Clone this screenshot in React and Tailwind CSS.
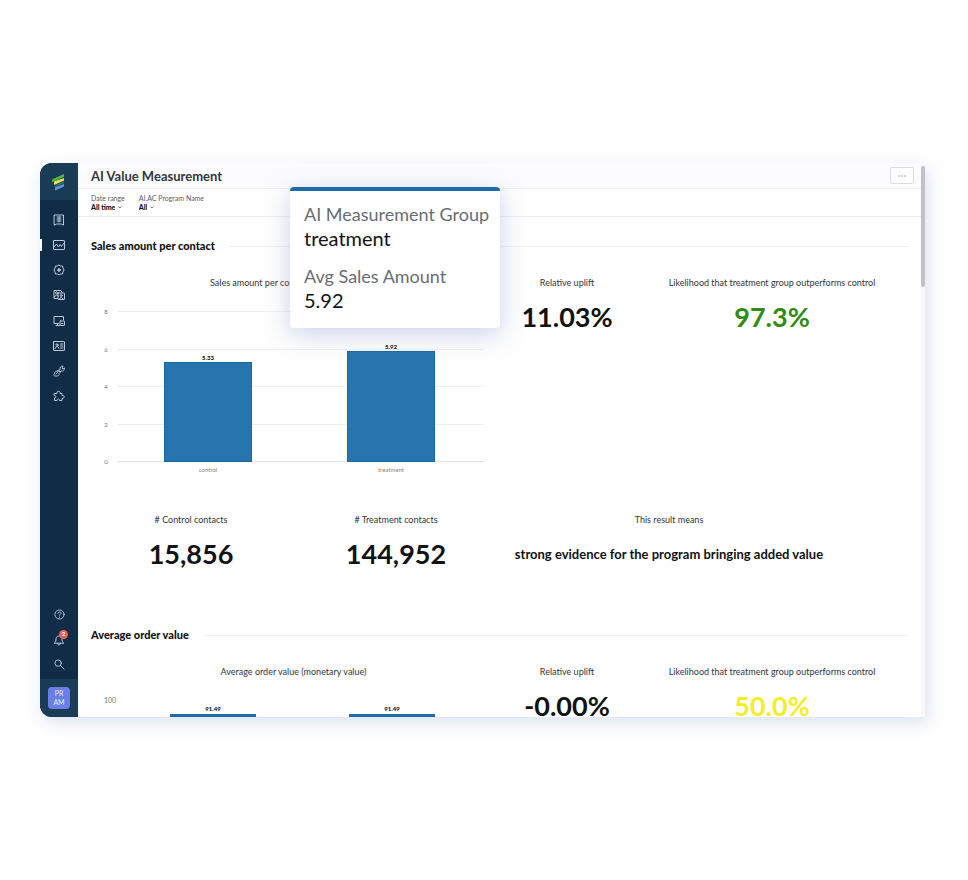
import React from "react";

const ink = "#111214";

function Icon({ children, size = 12 }) {
  return (
    <svg
      width={size}
      height={size}
      viewBox="0 0 24 24"
      fill="none"
      stroke="currentColor"
      strokeWidth="2"
      strokeLinecap="round"
      strokeLinejoin="round"
      aria-hidden="true"
    >
      {children}
    </svg>
  );
}

const navItems = [
  {
    name: "Programs",
    icon: (
      <>
        <path d="M3 2h18v20l-4-2h-10l-4 2z" />
        <path d="M8 6h8M8 10h8M8 14h8M12 6v10" />
      </>
    ),
  },
  {
    name: "Analytics",
    active: true,
    icon: (
      <>
        <rect x="1" y="3" width="22" height="18" rx="1" />
        <path d="M2 16l5-6 4 6 3-5 3 4 5-7" />
      </>
    ),
  },
  {
    name: "Automation",
    icon: (
      <>
        <path d="M12 2l3 2h4l1 4 2 4-2 4-1 4h-4l-3 2-3-2H5l-1-4-2-4 2-4 1-4h4z" />
        <circle cx="12" cy="12" r="2.500" fill="currentColor" />
      </>
    ),
  },
  {
    name: "Content",
    icon: (
      <>
        <path d="M9 19H2V3h14l2 4" />
        <circle cx="7" cy="8" r="2" />
        <path d="M2 16l5-4 3 2" />
        <rect x="10" y="8" width="13" height="13" rx="1" />
        <circle cx="16.500" cy="13" r="2" />
        <path d="M13 20c0-4 7-4 7 0" />
      </>
    ),
  },
  {
    name: "Channels",
    icon: (
      <>
        <path d="M12 17H2V3h19v7" />
        <path d="M6 21h7M9 17v4" />
        <rect x="14" y="12" width="9" height="9" rx="1" />
        <path d="M17 17h3" />
      </>
    ),
  },
  {
    name: "Contacts",
    icon: (
      <>
        <rect x="1" y="3" width="22" height="18" rx="1" />
        <circle cx="8" cy="10" r="2.300" />
        <path d="M4 17c0-5 8-5 8 0M15 8h5M15 12h5M15 16h5" />
      </>
    ),
  },
  {
    name: "Tools",
    icon: (
      <>
        <path d="M14 9c-1-4 2-7 6-7l-2 4 2 2 3-2c0 5-3 7-7 6l-2 2-3-3z" />
        <path d="M10 11l4 4-2 2c1 3-2 6-7 5-5 0-3-3-2-5 1-4 3-5 5-4z" />
        <path d="M6 18l3-3" />
      </>
    ),
  },
  {
    name: "Add-ons",
    icon: (
      <path d="M3 7h5c-2-6 8-6 6 0h4v4c6-1 6 6 0 6v4h-5c0-4-5-4-5 0H3v-5c4 0 4-5 0-5z" />
    ),
  },
];

function Logo() {
  return (
    <svg width="16" height="18" viewBox="0 0 16 18" aria-label="Emarsys" role="img">
      <path d="M1 6.500 13 1v2.800L5 7.500 1 9z" fill="#56b947" />
      <path d="M3 8.500 13 5v2.600L3 12z" fill="#f4e04d" />
      <path d="M13 8v2.500L4 14.500V12z" fill="#2c6d6b" />
      <path d="M4 14.500 13 11v2.500L4 17.500z" fill="#6794e0" />
    </svg>
  );
}

function Sidebar() {
  return (
    <aside className="flex w-[38px] shrink-0 flex-col overflow-hidden rounded-l-xl bg-[#102c47] text-[#b9c8d8]">
      <div className="flex h-[37px] items-center justify-center bg-[#1b3c57]">
        <Logo />
      </div>
      <nav className="mt-[7px] flex h-[202px] flex-col justify-between">
        {navItems.map((item) => (
          <button
            key={item.name}
            type="button"
            aria-label={item.name}
            className="flex h-[25px] w-full items-center"
          >
            <span className={item.active ? "h-3 w-[2px] bg-white" : "h-3 w-[2px]"} />
            <span className="flex flex-1 justify-center pr-[2px]">
              <Icon>{item.icon}</Icon>
            </span>
          </button>
        ))}
      </nav>
      <div className="mt-auto flex flex-col pb-[2px]">
        <button type="button" aria-label="Help" className="flex h-[25px] items-center justify-center">
          <Icon size={11}>
            <circle cx="12" cy="12" r="10" />
            <path d="M8.500 9.500c0-4.500 7-4 7-.5 0 2.500-3.500 2.500-3.500 5M12 17.500v.5" />
          </Icon>
        </button>
        <button type="button" aria-label="Notifications" className="flex h-[25px] items-center justify-center">
          <span className="relative">
            <Icon>
              <path d="M3 18c3-2 3-5 3-8 0-8 12-8 12 0 0 3 0 6 3 8zM9 19c0 4 6 4 6 0" />
            </Icon>
            <span className="absolute -top-1 left-[6px] flex h-[9px] w-[9px] items-center justify-center rounded-full bg-[#ec5f5a] text-[6px] leading-none font-bold text-white">
              2
            </span>
          </span>
        </button>
        <button type="button" aria-label="Search" className="flex h-[25px] items-center justify-center">
          <Icon size={11}>
            <circle cx="9" cy="9" r="7" />
            <path d="M14.500 14.500 22 22" />
          </Icon>
        </button>
      </div>
      <div className="flex h-[38px] items-center justify-center bg-[#1b3c57]">
        <button
          type="button"
          className="flex h-[22px] w-[22px] flex-col items-center justify-center rounded-[4px] bg-[#6a7fe6] text-[7px] leading-[9px] text-[#e6ebff]"
        >
          <span>PR</span>
          <span>AM</span>
        </button>
      </div>
    </aside>
  );
}

function Filter({ id, label, value }) {
  return (
    <div className="flex flex-col items-start">
      <label htmlFor={id} className="text-[7px] leading-[9px] text-[#5c6066]">
        {label}
      </label>
      <div className="flex items-center gap-[3px]">
        <select
          id={id}
          defaultValue={value}
          className="field-sizing-content h-[9px] appearance-none bg-transparent text-[7px] leading-[9px] font-black text-[#111214] outline-none"
        >
          <option>{value}</option>
        </select>
        <svg width="4" height="3" viewBox="0 0 8 6" fill="none" stroke="#777" strokeWidth="2" aria-hidden="true">
          <path d="M1 1l3 3 3-3" />
        </svg>
      </div>
    </div>
  );
}

function SectionTitle({ children }) {
  return (
    <div className="flex items-center gap-[14px]">
      <h2 className="text-[11px] leading-4 font-black text-[#111214]">{children}</h2>
      <hr className="flex-1 border-[#f0f0f2]" />
    </div>
  );
}

function Metric({ label, value, color = "text-[#111214]", small = false }) {
  return (
    <div className="flex flex-col items-center text-center whitespace-nowrap">
      <h3 className="text-[9px] leading-3 text-[#33363a]">{label}</h3>
      <p
        className={
          small
            ? `mt-[17px] text-[13px] leading-[22px] font-bold ${color}`
            : `mt-[17px] text-[27px] leading-[22px] font-bold ${color}`
        }
      >
        {value}
      </p>
    </div>
  );
}

function SalesChart() {
  const base = 159;
  const ticks = [0, 2, 4, 6, 8];
  const bars = [
    { name: "control", value: 5.33, x: 73 },
    { name: "treatment", value: 5.92, x: 256 },
  ];
  return (
    <svg width="394" height="174" viewBox="0 0 394 174" className="mt-[13px] block" role="img" aria-label="Sales amount per contact by group">
      {ticks.map((t) => (
        <g key={t}>
          <line
            x1="27"
            x2="393"
            y1={Math.round(base - t * 18.75) + 0.5}
            y2={Math.round(base - t * 18.75) + 0.5}
            stroke={t === 0 ? "#e2e3e5" : "#f0f0f2"}
          />
          <text x="15" y={base - t * 18.75 + 3} fontSize="6" fill="#777" textAnchor="middle">
            {t}
          </text>
        </g>
      ))}
      {bars.map((b) => {
        const height = Math.round(b.value * 18.75) - 1;
        return (
          <g key={b.name}>
            <rect x={b.x + 0.5} y={base - height + 0.5} width="87" height={height} fill="#2775ae" stroke="#1a68a4" />
            <text x={b.x + 44} y={base - height - 2} fontSize="6" fontWeight="900" fill={ink} textAnchor="middle">
              {b.value.toFixed(2)}
            </text>
            <text x={b.x + 44} y="170" fontSize="6" fill="#888" textAnchor="middle">
              {b.name}
            </text>
          </g>
        );
      })}
    </svg>
  );
}

function OrderChart() {
  return (
    <svg width="394" height="24" viewBox="0 0 394 24" className="mt-[15px] block" role="img" aria-label="Average order value by group">
      <text x="19" y="10" fontSize="7" fill="#777" textAnchor="middle">
        100
      </text>
      {[79, 258].map((x) => (
        <g key={x}>
          <rect x={x} y="21" width="86" height="3" fill="#1f6ca6" />
          <text x={x + 43} y="18" fontSize="6" fontWeight="900" fill={ink} textAnchor="middle">
            91.49
          </text>
        </g>
      ))}
    </svg>
  );
}

function Tooltip() {
  return (
    <div
      role="tooltip"
      className="absolute top-[24px] left-[250px] w-[210px] rounded-[4px] border-t-4 border-[#1c6cab] bg-white px-[14px] pt-[11px] pb-4 text-[18px] leading-6 whitespace-nowrap shadow-[0_6px_24px_rgba(110,130,200,0.35)]"
    >
      <dl>
        <dt className="text-[#686d74]">AI Measurement Group</dt>
        <dd className="mb-[14px] text-[20px] text-[#111214]">treatment</dd>
        <dt className="text-[#686d74]">Avg Sales Amount</dt>
        <dd className="text-[20px] text-[#111214]">5.92</dd>
      </dl>
    </div>
  );
}

export default function App() {
  return (
    <div className="min-h-screen bg-[#fefefe] pt-[163px] pr-[43px] pl-10 font-['Lato','Liberation_Sans',sans-serif]">
      <div className="relative flex rounded-l-xl bg-[#fefefe] shadow-[3px_6px_16px_rgba(150,170,215,0.32)]">
        <Sidebar />
        <main className="min-w-0 flex-1">
          <header className="flex h-[26px] items-center justify-between border-b border-[#ececef] bg-[#fcfcfe] pr-[7px] pl-[13px]">
            <h1 className="text-[13px] leading-4 font-bold text-[#33363a]">AI Value Measurement</h1>
            <button
              type="button"
              aria-label="More options"
              className="flex h-[17px] w-6 items-center justify-center rounded-[2px] border border-[#dcdce2] bg-white"
            >
              <svg width="8" height="2" viewBox="0 0 8 2" fill="#999" aria-hidden="true">
                <circle cx="1" cy="1" r="0.800" />
                <circle cx="4" cy="1" r="0.800" />
                <circle cx="7" cy="1" r="0.800" />
              </svg>
            </button>
          </header>
          <div className="flex h-[28px] gap-[14px] border-b border-[#ececef] pt-[5px] pl-[13px]">
            <Filter id="date-range" label="Date range" value="All time" />
            <Filter id="program-name" label="AI.AC Program Name" value="All" />
          </div>

          <section className="pt-[21px] pr-3 pl-[13px]">
            <SectionTitle>Sales amount per contact</SectionTitle>
            <div className="mt-[23px] grid grid-cols-[405fr_142fr_268fr_3fr]">
              <div>
                <h3 className="text-center text-[9px] leading-3 text-[#33363a]">
                  Sales amount per contact (monetary value)
                </h3>
                <SalesChart />
              </div>
              <Metric label="Relative uplift" value="11.03%" />
              <Metric
                label="Likelihood that treatment group outperforms control"
                value="97.3%"
                color="text-[#318c12]"
              />
            </div>
            <div className="mt-[38px] grid grid-cols-[200fr_210fr_336fr_72fr]">
              <Metric label="# Control contacts" value="15,856" />
              <Metric label="# Treatment contacts" value="144,952" />
              <Metric
                label="This result means"
                value="strong evidence for the program bringing added value"
                small
              />
            </div>
          </section>

          <section className="pt-[62px] pr-3 pl-[13px]">
            <SectionTitle>Average order value</SectionTitle>
            <div className="mt-[23px] grid grid-cols-[405fr_142fr_268fr_3fr]">
              <div>
                <h3 className="text-center text-[9px] leading-3 text-[#33363a]">
                  Average order value (monetary value)
                </h3>
                <OrderChart />
              </div>
              <Metric label="Relative uplift" value="-0.00%" />
              <Metric
                label="Likelihood that treatment group outperforms control"
                value="50.0%"
                color="text-[#f5ee27]"
              />
            </div>
          </section>
        </main>
        <div className="w-1 shrink-0 bg-[#f8f8fa] pt-[3px]">
          <div className="h-[121px] rounded-full bg-[#c2c2c4]" />
        </div>
        <Tooltip />
      </div>
    </div>
  );
}
